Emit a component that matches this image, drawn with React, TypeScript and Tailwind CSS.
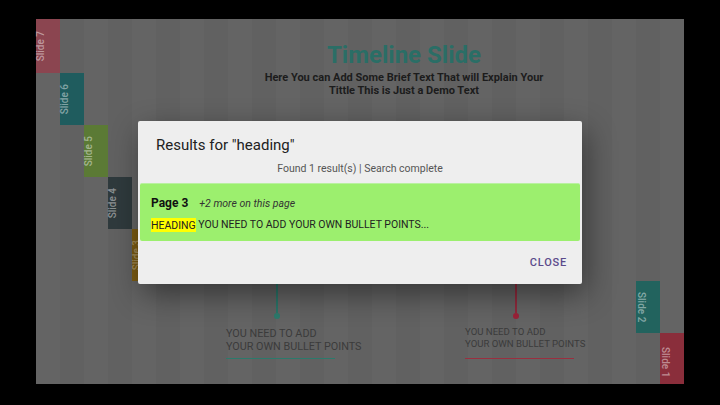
import React from "react";

export default function App() {
  return (
    <div className="relative w-[720px] h-[405px] bg-black overflow-hidden pl-[36px] pt-[19px] font-['Roboto',sans-serif]">
      {/* Slide (dimmed by modal) */}
      <div className="w-[648px] h-[365px] grid grid-cols-[repeat(27,24px)] grid-rows-[54px_52px_52px_52px_52px_52px_51px] bg-[repeating-linear-gradient(90deg,#646464_0px,#646464_24px,#616161_24px,#616161_48px)]">
        {/* left staircase tabs */}
        <div className="col-start-1 row-start-1 bg-[#8b4550] flex items-center justify-start">
          <span className="[writing-mode:vertical-rl] rotate-180 text-[10px] leading-[10px] font-medium text-white/45">Slide 7</span>
        </div>
        <div className="col-start-2 row-start-2 bg-[#1f5c5e] flex items-center justify-start">
          <span className="[writing-mode:vertical-rl] rotate-180 text-[10px] leading-[10px] font-medium text-white/45">Slide 6</span>
        </div>
        <div className="col-start-3 row-start-3 bg-[#5b7a35] flex items-center justify-start">
          <span className="[writing-mode:vertical-rl] rotate-180 text-[10px] leading-[10px] font-medium text-white/45">Slide 5</span>
        </div>
        <div className="col-start-4 row-start-4 bg-[#2f3a3d] flex items-center justify-start">
          <span className="[writing-mode:vertical-rl] rotate-180 text-[10px] leading-[10px] font-medium text-white/45">Slide 4</span>
        </div>
        <div className="col-start-5 row-start-5 bg-[#7b5b12] flex items-center justify-start">
          <span className="[writing-mode:vertical-rl] rotate-180 text-[10px] leading-[10px] font-medium text-white/30">Slide 3</span>
        </div>

        {/* central content */}
        <div className="col-start-6 col-end-26 row-start-1 row-end-8 flex flex-col">
          <div className="pl-[16px] pt-[22px] flex flex-col items-center">
            <h1 className="text-[24px] leading-[28px] font-bold text-[#2a6e66]">Timeline Slide</h1>
            <p className="mt-[2px] text-[11px] leading-[13.3px] font-bold text-[#1c1c1c] text-center">
              Here You can Add Some Brief Text That will Explain Your
              <br />
              Tittle This is Just a Demo Text
            </p>
          </div>

          <div className="mt-auto pb-[25px] flex items-start">
            <div className="ml-[70px] w-[140px] flex flex-col">
              <div className="ml-[50px] w-[1.5px] h-[60px] bg-[#2a7468]" />
              <div className="ml-[48px] w-[6px] h-[6px] rounded-full bg-[#2c7a6c]" />
              <p className="mt-[8px] text-[10.8px] leading-[13px] text-[#3b3b3b] whitespace-nowrap">
                YOU NEED TO ADD
                <br />
                YOUR OWN BULLET POINTS
              </p>
              <div className="mt-[5px] w-[109px] h-px bg-[#2c7a6c]" />
            </div>
            <div className="ml-[99px] w-[140px] flex flex-col">
              <div className="ml-[50px] w-[1.5px] h-[60px] bg-[#8e2a3c]" />
              <div className="ml-[48px] w-[6px] h-[6px] rounded-full bg-[#9b2238]" />
              <p className="mt-[7px] text-[9.6px] leading-[11.5px] text-[#3b3b3b] whitespace-nowrap">
                YOU NEED TO ADD
                <br />
                YOUR OWN BULLET POINTS
              </p>
              <div className="mt-[9px] w-[109px] h-px bg-[#9a2f3f]" />
            </div>
          </div>
        </div>

        {/* right staircase tabs */}
        <div className="col-start-26 row-start-6 bg-[#22635e] flex items-center justify-start">
          <span className="[writing-mode:vertical-rl] text-[10px] leading-[10px] font-medium text-white/45">Slide 2</span>
        </div>
        <div className="col-start-27 row-start-7 bg-[#8a2e3b] flex items-center justify-start">
          <span className="[writing-mode:vertical-rl] text-[10px] leading-[10px] font-medium text-white/45 mt-[8px]">Slide 1</span>
        </div>
      </div>

      {/* Modal dialog */}
      <div className="absolute left-[138px] top-[121px] w-[444px] h-[163px] bg-[#eeeeee] rounded-[2px] shadow-[4px_10px_30px_rgba(0,0,0,0.45)] flex flex-col">
        <h2 className="pt-[14px] pl-[18px] text-[15px] leading-[20px] text-[#212121]">Results for "heading"</h2>
        <p className="mt-[7px] text-[10.5px] leading-[14px] text-[#555555] text-center">Found 1 result(s) | Search complete</p>
        <div className="mt-[7px] mx-[2px] h-[58px] bg-[#9cef6e] rounded-[2px] border-t border-[#b9f0a0] pl-[11px] pt-[11px]">
          <div className="flex items-baseline">
            <span className="text-[12px] leading-[16px] font-bold text-[#111111]">Page 3</span>
            <span className="ml-[11px] text-[10.5px] leading-[16px] italic text-[#333333]">+2 more on this page</span>
          </div>
          <p className="mt-[6px] text-[10.5px] leading-[14px] text-[#222222]">
            <span className="bg-[#ffff00] py-[0.5px]">HEADING</span> YOU NEED TO ADD YOUR OWN BULLET POINTS...
          </p>
        </div>
        <div className="flex-1 flex items-center justify-end pr-[15px]">
          <span className="text-[11px] leading-[14px] font-medium tracking-[0.8px] text-[#5b4a8b]">CLOSE</span>
        </div>
      </div>
    </div>
  );
}
